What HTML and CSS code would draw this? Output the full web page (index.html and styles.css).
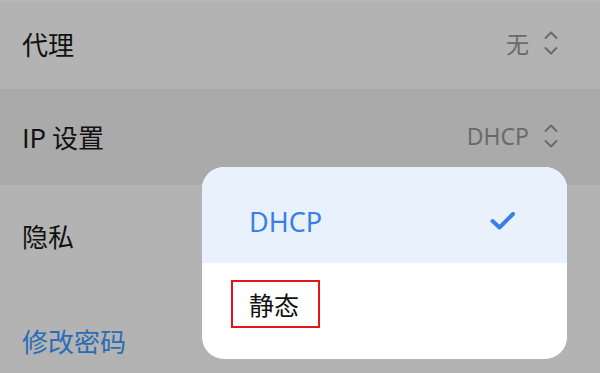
FILE: index.html
```html
<!DOCTYPE html>
<html lang="zh">
<head>
<meta charset="utf-8">
<link rel="stylesheet" href="styles.css">
</head>
<body>
<div class="screen">
  <div class="row row-proxy">
    <span class="label">代理</span>
    <span class="value">无
      <svg class="updown" width="14" height="26" viewBox="0 0 14 26"><path d="M1.5 8 L7 2.5 L12.5 8 M1.5 18 L7 23.5 L12.5 18" fill="none" stroke="#6a6a6a" stroke-width="2" stroke-linecap="round" stroke-linejoin="round"/></svg>
    </span>
  </div>
  <div class="row row-ip">
    <span class="label">IP 设置</span>
    <span class="value">DHCP
      <svg class="updown" width="14" height="26" viewBox="0 0 14 26"><path d="M1.5 8 L7 2.5 L12.5 8 M1.5 18 L7 23.5 L12.5 18" fill="none" stroke="#6a6a6a" stroke-width="2" stroke-linecap="round" stroke-linejoin="round"/></svg>
    </span>
  </div>
  <div class="row row-privacy">
    <span class="label">隐私</span>
  </div>
  <div class="row row-pwd">
    <span class="link">修改密码</span>
  </div>

  <div class="menu">
    <div class="option selected">
      <span>DHCP</span>
      <svg class="check" width="26" height="18" viewBox="0 0 26 18"><path d="M2.5 9 L9.5 15.5 L23 2" fill="none" stroke="#3a7fe6" stroke-width="4" stroke-linecap="round" stroke-linejoin="round"/></svg>
    </div>
    <div class="option plain">
      <span class="boxed">静态</span>
    </div>
  </div>
</div>
</body>
</html>
```

FILE: styles.css
```css
html, body {
  margin: 0;
  padding: 0;
}
body {
  width: 600px;
  height: 373px;
  overflow: hidden;
  background: #b3b3b3;
  font-family: "Noto Sans", "Noto Sans CJK SC", sans-serif;
}
.screen {
  position: relative;
  width: 600px;
  height: 373px;
  overflow: hidden;
  display: flex;
  flex-direction: column;
}
.row {
  flex-shrink: 0;
  display: flex;
  align-items: center;
  justify-content: space-between;
  padding: 0 42px 0 22px;
  box-sizing: border-box;
}
.row-proxy {
  height: 89px;
  padding-bottom: 5px;
  border-top: 2px solid #b8b8b8;
}
.row-ip {
  height: 96px;
  background: #aaaaaa;
  padding-bottom: 2px;
}
.row-privacy {
  height: 100px;
}
.row-pwd {
  height: 88px;
  padding-top: 22px;
}
.label {
  font-size: 26px;
  color: #111111;
  font-family: "Noto Sans CJK SC", sans-serif;
}
.value {
  display: flex;
  align-items: center;
  gap: 15px;
  font-size: 23px;
  color: #6a6a6a;
  font-family: "Noto Sans", "Noto Sans CJK SC", sans-serif;
}
.updown {
  display: block;
}
.link {
  font-size: 26px;
  color: #2b6cb7;
  font-family: "Noto Sans CJK SC", sans-serif;
}
.menu {
  position: absolute;
  left: 202px;
  top: 167px;
  width: 365px;
  height: 192px;
  border-radius: 22px;
  overflow: hidden;
  background: #ffffff;
  display: flex;
  flex-direction: column;
}
.option {
  display: flex;
  align-items: center;
  justify-content: space-between;
  padding: 0 51px 0 47px;
}
.option.selected {
  height: 96px;
  background: #e9f1fd;
  font-size: 27px;
  color: #3a7fe6;
  padding-top: 12px;
  box-sizing: border-box;
}
.option.plain {
  flex: 1;
  align-items: flex-start;
  padding-left: 29px;
  padding-top: 17px;
}
.boxed {
  display: flex;
  align-items: center;
  width: 89px;
  height: 48px;
  box-sizing: border-box;
  border: 2px solid #e3141b;
  padding-left: 16px;
  font-size: 25px;
  color: #111111;
  font-family: "Noto Sans CJK SC", sans-serif;
}
.check {
  display: block;
}
```
